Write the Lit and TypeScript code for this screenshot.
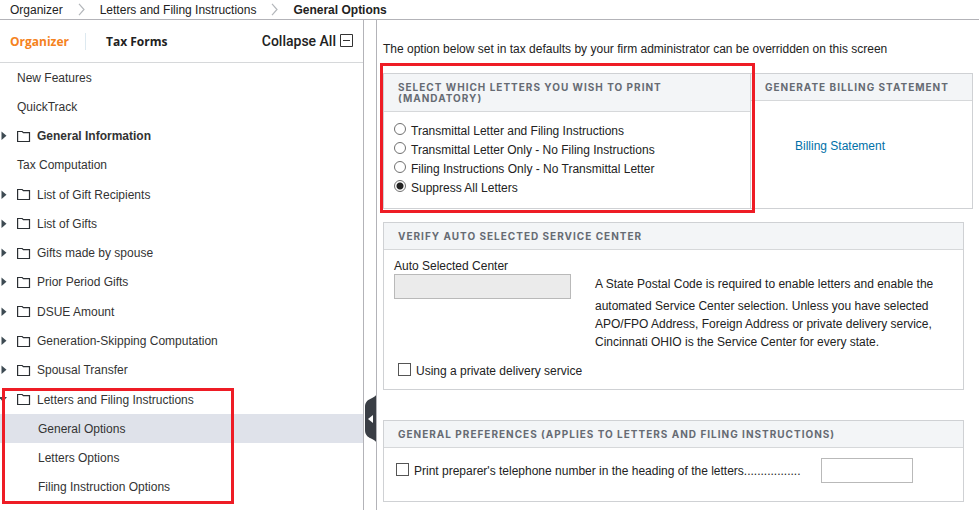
import { LitElement, html, svg, css, nothing } from "lit";
import { customElement, state } from "lit/decorators.js";
import { classMap } from "lit/directives/class-map.js";

interface TreeEntry {
  label: string;
  folder?: boolean;
  strong?: boolean;
  children?: string[];
}

const TREE: TreeEntry[] = [
  { label: "New Features" },
  { label: "QuickTrack" },
  { label: "General Information", folder: true, strong: true },
  { label: "Tax Computation" },
  { label: "List of Gift Recipients", folder: true },
  { label: "List of Gifts", folder: true },
  { label: "Gifts made by spouse", folder: true },
  { label: "Prior Period Gifts", folder: true },
  { label: "DSUE Amount", folder: true },
  { label: "Generation-Skipping Computation", folder: true },
  { label: "Spousal Transfer", folder: true },
  {
    label: "Letters and Filing Instructions",
    folder: true,
    children: ["General Options", "Letters Options", "Filing Instruction Options"],
  },
];

const LETTER_CHOICES = [
  "Transmittal Letter and Filing Instructions",
  "Transmittal Letter Only - No Filing Instructions",
  "Filing Instructions Only - No Transmittal Letter",
  "Suppress All Letters",
];

const chevron = html`<svg class="chevron" width="7" height="13" viewBox="0 0 7 13" aria-hidden="true">
  <path d="M1 .8 6 6.5 1 12.2" fill="none" stroke="#b4b7bb" stroke-width="1.2" />
</svg>`;

const folderIcon = html`<svg class="folder" width="14" height="13" viewBox="0 0 14 13" aria-hidden="true">
  <path d="M.6 11.5V1.5H5.2L6.4 2.6H12.5V11.5Z" fill="none" stroke="#2b2f33" stroke-width="1.2" />
</svg>`;

@customElement("app-breadcrumb")
export class AppBreadcrumb extends LitElement {
  static styles = css`
    :host {
      display: block;
      border-bottom: 1px solid #b3b3b8;
    }
    .trail {
      display: flex;
      align-items: center;
      gap: 15px;
      height: 19px;
      padding-left: 10px;
      font-size: 12px;
      color: #222;
    }
    .trail a {
      color: inherit;
      text-decoration: none;
    }
    .current {
      font-weight: 700;
    }
  `;

  render() {
    return html`<nav class="trail" aria-label="Breadcrumb">
      <a href="#organizer">Organizer</a>
      ${chevron}
      <a href="#letters">Letters and Filing Instructions</a>
      ${chevron}
      <span class="current" aria-current="page">General Options</span>
    </nav>`;
  }
}

@customElement("app-sidebar")
export class AppSidebar extends LitElement {
  static styles = css`
    :host {
      display: flex;
      flex-direction: column;
      box-sizing: border-box;
      flex: 0 0 364px;
      border-right: 1px solid #b3b3b8;
      padding-bottom: 8px;
    }
    a {
      color: inherit;
      text-decoration: none;
    }
    button {
      border: 0;
      padding: 0;
      background: none;
      color: inherit;
      font: inherit;
      cursor: pointer;
    }
    .head {
      display: flex;
      align-items: center;
      height: 42px;
      padding: 0 9px 0 10px;
      border-bottom: 1px solid #d6d8da;
      color: #222;
    }
    .tab {
      font: 700 12px "Open Sans", sans-serif;
    }
    .tab.active {
      color: #f58220;
      padding-right: 16px;
      margin-right: 20px;
      border-right: 1px solid #dde9f0;
    }
    .head .collapse {
      display: flex;
      align-items: center;
      gap: 4px;
      margin-left: auto;
      font: 500 14px Roboto, sans-serif;
    }
    .tree,
    .branch {
      list-style: none;
      margin: 0;
      padding: 0;
    }
    .tree {
      flex: 1;
      display: grid;
      grid-template-rows: repeat(15, minmax(29px, 1fr));
      font-size: 12px;
      color: #333;
    }
    .row {
      display: grid;
      grid-template-columns: 17px 20px 1fr;
      align-items: center;
    }
    .row.plain {
      grid-template-columns: 1fr;
      padding-left: 17px;
    }
    .row.strong {
      font-weight: 700;
    }
    .toggle,
    .toggle svg,
    .folder {
      display: block;
    }
    .group {
      position: relative;
      grid-row: span 4;
      display: grid;
      grid-template-rows: 1fr 3fr;
    }
    .branch {
      display: grid;
      grid-template-rows: repeat(3, 1fr);
    }
    .leaf {
      display: flex;
      align-items: center;
      padding-left: 38px;
    }
    .leaf.selected {
      background: #dfe2ea;
    }
    .mark {
      position: absolute;
      inset: 3px 129px -2px 2px;
      border: 3px solid #ee1c25;
      pointer-events: none;
    }
  `;

  @state() private selected = "General Options";

  private arrow(open: boolean) {
    return html`<button class="toggle" aria-label=${open ? "Collapse" : "Expand"}>
      <svg width="8" height="10" viewBox="0 0 8 10" aria-hidden="true">
        ${open
          ? svg`<path d="M-1 2H7L3 7Z" fill="#3d4a52" />`
          : svg`<path d="M1.5 .5V9L6.5 4.7Z" fill="#3d4a52" />`}
      </svg>
    </button>`;
  }

  private folderRow(entry: TreeEntry) {
    return html`${this.arrow(!!entry.children)}${folderIcon}<a href="#tree">${entry.label}</a>`;
  }

  private entry(entry: TreeEntry) {
    if (entry.children) {
      return html`<li class="group">
        <div class="row">${this.folderRow(entry)}</div>
        <ul class="branch">
          ${entry.children.map(
            (name) => html`<li class=${classMap({ leaf: true, selected: name === this.selected })}>
              <a href="#tree" @click=${() => (this.selected = name)}>${name}</a>
            </li>`
          )}
        </ul>
        <div class="mark"></div>
      </li>`;
    }
    return html`<li class=${classMap({ row: true, plain: !entry.folder, strong: !!entry.strong })}>
      ${entry.folder ? this.folderRow(entry) : html`<a href="#tree">${entry.label}</a>`}
    </li>`;
  }

  render() {
    return html`
      <div class="head">
        <button class="tab active">Organizer</button>
        <button class="tab">Tax Forms</button>
        <button class="collapse">
          Collapse All
          <svg width="14" height="14" viewBox="0 0 14 14" aria-hidden="true">
            <path d="M.5 .5H12.5V12.5H.5ZM3 6.5H10" fill="none" stroke="#333" />
          </svg>
        </button>
      </div>
      <ul class="tree">
        ${TREE.map((e) => this.entry(e))}
      </ul>
    `;
  }
}

@customElement("app-panel")
export class AppPanel extends LitElement {
  static properties = { heading: {} };
  declare heading: string;

  static styles = css`
    :host {
      display: block;
      box-sizing: border-box;
      border: 1px solid #cfd1d4;
      background: #fff;
    }
    .heading {
      margin: 0;
      padding: 8px 14px 7px;
      background: #f3f5f7;
      border-bottom: 1px solid #d6d8da;
      color: #666b73;
      font: 700 10px/11px Inter, sans-serif;
      letter-spacing: 1px;
      text-transform: uppercase;
    }
  `;

  render() {
    return html`<h2 class="heading">${this.heading || nothing}</h2>
      <slot></slot>`;
  }
}

@customElement("app-root")
export class AppRoot extends LitElement {
  static styles = css`
    :host {
      display: flex;
      flex-direction: column;
      min-height: 100vh;
      background: #fff;
      color: #222;
      font: 12px "Liberation Sans", Arial, sans-serif;
    }
    .body {
      flex: 1;
      display: flex;
    }
    .gutter {
      position: relative;
      flex: 0 0 12px;
      border-right: 1px solid #b3b3b8;
    }
    .handle {
      position: absolute;
      right: 0;
      bottom: 68px;
      border: 0;
      padding: 0;
      background: none;
      cursor: pointer;
    }
    .handle svg {
      display: block;
    }
    .main {
      flex: 1;
      min-width: 0;
      padding: 22px 6px 8px;
    }
    .intro {
      margin: 0;
      line-height: 14px;
    }
    .top {
      display: grid;
      grid-template-columns: 368fr 222fr;
      margin: 17px 0 13px;
    }
    .letters {
      position: relative;
    }
    .mark {
      position: absolute;
      inset: -11px -5px -5px -4px;
      border: 3px solid #ee1c25;
      pointer-events: none;
    }
    .billing {
      border-left-width: 0;
    }
    .billing a {
      display: block;
      padding: 38px 14px 38px 44px;
      color: #0070a8;
      text-decoration: none;
      line-height: 14px;
    }
    .wide {
      margin-right: 9px;
    }
    .prefs {
      margin-top: 30px;
    }
    .choices {
      margin: 0;
      border: 0;
      padding: 9px 10px 11px;
    }
    .choice {
      display: flex;
      align-items: center;
      gap: 5px;
      height: 19px;
    }
    .choice input,
    .check input {
      appearance: none;
      box-sizing: border-box;
      flex: none;
      margin: 0 0 3px;
      background: #fff;
    }
    .choice input {
      width: 12px;
      height: 12px;
      border: 1px solid #707070;
      border-radius: 50%;
    }
    .choice input:checked {
      background: radial-gradient(circle, #222 3px, #fff 4px);
    }
    .check {
      display: flex;
      align-items: center;
      gap: 5px;
    }
    .check input {
      width: 13px;
      height: 13px;
      border: 1px solid #555;
    }
    .check input:checked {
      background: #555;
    }
    .center {
      display: grid;
      grid-template-columns: 177px 1fr;
      column-gap: 24px;
      padding: 9px 10px;
    }
    .field label {
      display: block;
      margin-bottom: 1px;
      line-height: 14px;
    }
    .field input,
    .phone {
      box-sizing: border-box;
      height: 25px;
      border: 1px solid #b9b9b9;
      padding: 0 4px;
      font: inherit;
    }
    .field input {
      width: 100%;
      background: #ebebeb;
    }
    .note {
      padding-top: 16px;
      line-height: 18px;
    }
    .note p {
      margin: 0;
    }
    .note p + p {
      margin-top: 4px;
    }
    .center .check {
      grid-column: 1 / -1;
      padding: 12px 4px 1px;
    }
    .telephone {
      display: flex;
      align-items: center;
      gap: 20px;
      padding: 10px 12px 18px;
    }
    .phone {
      width: 92px;
    }
  `;

  render() {
    return html`
      <app-breadcrumb></app-breadcrumb>
      <div class="body">
        <app-sidebar></app-sidebar>
        <div class="gutter">
          <button class="handle" aria-label="Hide navigation">
            <svg width="11" height="47" viewBox="0 0 11 47" aria-hidden="true">
              <path d="M11 0C9 4 0 3 0 12V35C0 44 9 43 11 47Z" fill="#3a3e45" />
              <path d="M8 20V28L3 24Z" fill="#fff" />
            </svg>
          </button>
        </div>
        <main class="main">
          <p class="intro">
            The option below set in tax defaults by your firm administrator can be overridden on this screen
          </p>
          <div class="top">
            <app-panel class="letters" heading="Select which letters you wish to print (mandatory)">
              <fieldset class="choices" aria-label="Letters to print">
                ${LETTER_CHOICES.map(
                  (text, i) => html`<label class="choice">
                    <input type="radio" name="letters" .checked=${i === 3} />
                    <span>${text}</span>
                  </label>`
                )}
              </fieldset>
              <div class="mark"></div>
            </app-panel>
            <app-panel class="billing" heading="Generate billing statement">
              <a href="#billing">Billing Statement</a>
            </app-panel>
          </div>
          <app-panel class="wide" heading="Verify auto selected service center">
            <div class="center">
              <div class="field">
                <label for="center">Auto Selected Center</label>
                <input id="center" type="text" readonly />
              </div>
              <div class="note">
                <p>A State Postal Code is required to enable letters and enable the</p>
                <p>
                  automated Service Center selection. Unless you have selected<br />
                  APO/FPO Address, Foreign Address or private delivery service,<br />
                  Cincinnati OHIO is the Service Center for every state.
                </p>
              </div>
              <label class="check"><input type="checkbox" /><span>Using a private delivery service</span></label>
            </div>
          </app-panel>
          <app-panel class="wide prefs" heading="General preferences (applies to letters and filing instructions)">
            <div class="telephone">
              <label class="check">
                <input type="checkbox" />
                <span>Print preparer's telephone number in the heading of the letters.................</span>
              </label>
              <input class="phone" type="text" aria-label="Preparer's telephone number" />
            </div>
          </app-panel>
        </main>
      </div>
    `;
  }
}
